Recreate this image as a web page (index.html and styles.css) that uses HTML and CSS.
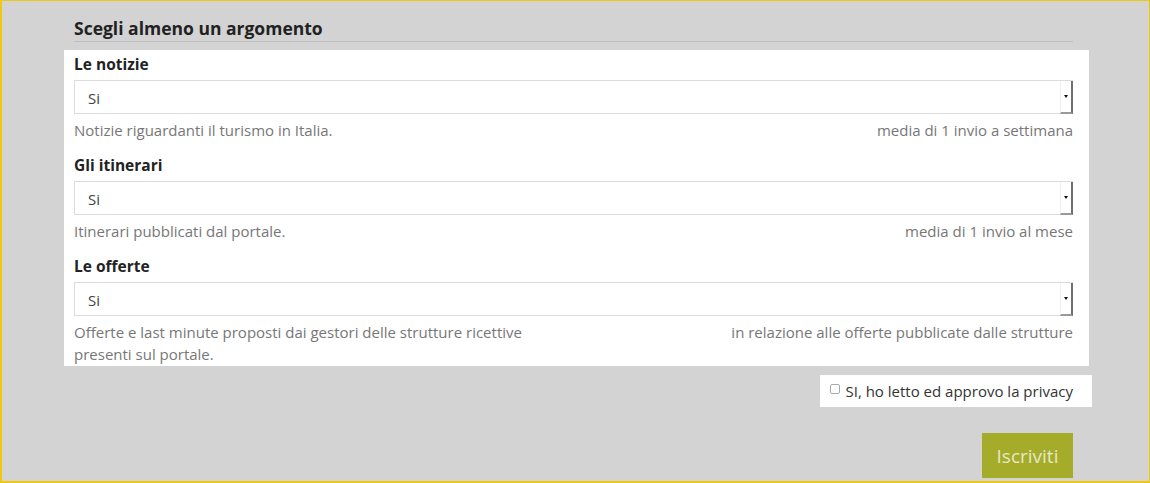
FILE: index.html
```html
<!DOCTYPE html>
<html lang="it">
<head>
<meta charset="utf-8">
<title>Iscrizione newsletter</title>
<link rel="stylesheet" href="styles.css">
</head>
<body>
<div class="frame">
  <form class="form">
    <h2 class="heading">Scegli almeno un argomento</h2>
    <div class="panel">
      <div class="group">
        <label class="label">Le notizie</label>
        <div class="select-wrap">
          <select class="select"><option>Si</option><option>No</option></select>
          <span class="select-btn"><span class="arrow"></span></span>
        </div>
        <div class="help">
          <span class="help-left">Notizie riguardanti il turismo in Italia.</span>
          <span class="help-right">media di 1 invio a settimana</span>
        </div>
      </div>
      <div class="group">
        <label class="label">Gli itinerari</label>
        <div class="select-wrap">
          <select class="select"><option>Si</option><option>No</option></select>
          <span class="select-btn"><span class="arrow"></span></span>
        </div>
        <div class="help">
          <span class="help-left">Itinerari pubblicati dal portale.</span>
          <span class="help-right">media di 1 invio al mese</span>
        </div>
      </div>
      <div class="group">
        <label class="label">Le offerte</label>
        <div class="select-wrap">
          <select class="select"><option>Si</option><option>No</option></select>
          <span class="select-btn"><span class="arrow"></span></span>
        </div>
        <div class="help">
          <span class="help-left">Offerte e last minute proposti dai gestori delle strutture ricettive presenti sul portale.</span>
          <span class="help-right">in relazione alle offerte pubblicate dalle strutture</span>
        </div>
      </div>
    </div>
    <div class="privacy-row">
      <label class="privacy"><input type="checkbox" class="check"> SI, ho letto ed approvo la privacy</label>
    </div>
    <div class="submit-row">
      <button type="button" class="btn">Iscriviti</button>
    </div>
  </form>
</div>
</body>
</html>
```
FILE: styles.css
```css
* { box-sizing: border-box; }
html, body { margin: 0; padding: 0; }
body {
  font-family: "Open Sans", "DejaVu Sans", sans-serif;
  background: #d3d3d3;
}
.frame {
  width: 1150px;
  height: 483px;
  border-style: solid;
  border-color: #efc90f;
  border-width: 1px 1px 2px 2px;
  background: #d3d3d3;
  padding-left: 62px;
  overflow: hidden;
}
.form {
  width: 1025px;
  margin: 0;
}
.heading {
  margin: 15px 16px 8px 10px;
  padding: 0 0 1px;
  font-size: 17.5px;
  line-height: 24px;
  font-weight: 700;
  color: #222;
  border-bottom: 1px solid #bfbfbf;
}
.panel {
  background: #fff;
  padding: 3px 16px 1px 10px;
}
.group + .group { margin-top: 13px; }
.label {
  display: block;
  font-size: 15.5px;
  line-height: 22px;
  font-weight: 700;
  color: #222;
  margin-bottom: 5px;
}
.select-wrap {
  position: relative;
  height: 34px;
}
.select {
  -webkit-appearance: none;
  appearance: none;
  width: 100%;
  height: 34px;
  border: 1px solid #dcdcdc;
  border-radius: 0;
  background: #fff;
  padding: 2px 13px 0;
  font-family: "Open Sans", "DejaVu Sans", sans-serif;
  font-size: 15px;
  color: #444;
  outline: none;
}
.select-btn {
  position: absolute;
  top: 1px;
  right: 0;
  bottom: 0;
  width: 13px;
  border-left: 1px solid #f0f0f0;
  border-right: 2px solid #6f6f6f;
  border-bottom: 2px solid #9a9a9a;
  background: #fff;
  display: flex;
  align-items: center;
  justify-content: center;
}
.arrow {
  width: 0;
  height: 0;
  border-left: 2.5px solid transparent;
  border-right: 2.5px solid transparent;
  border-top: 3px solid #111;
}
.help {
  display: flex;
  justify-content: space-between;
  margin-top: 5px;
  font-size: 15px;
  line-height: 22px;
  color: #777;
}
.help-left { width: 500px; }
.help-right { text-align: right; }
.privacy-row {
  display: flex;
  justify-content: flex-end;
  margin: 9px -3px 0 0;
}
.privacy {
  display: flex;
  align-items: center;
  background: #fff;
  height: 32px;
  padding: 0 19px 0 10px;
  font-size: 15px;
  color: #333;
  gap: 5px;
}
.check {
  margin: 0;
  width: 10px;
  height: 10px;
  -webkit-appearance: none;
  appearance: none;
  border: 1px solid #aaa;
  border-radius: 2px;
  background: #fff;
  position: relative;
  top: -2px;
}
.submit-row {
  display: flex;
  justify-content: flex-end;
  margin: 26px 16px 0 0;
}
.btn {
  background: #a4ac2a;
  border: 0;
  color: #e6e8c6;
  font-family: "Open Sans", "DejaVu Sans", sans-serif;
  font-size: 19px;
  width: 91px;
  height: 45px;
  padding: 0;
}
```
